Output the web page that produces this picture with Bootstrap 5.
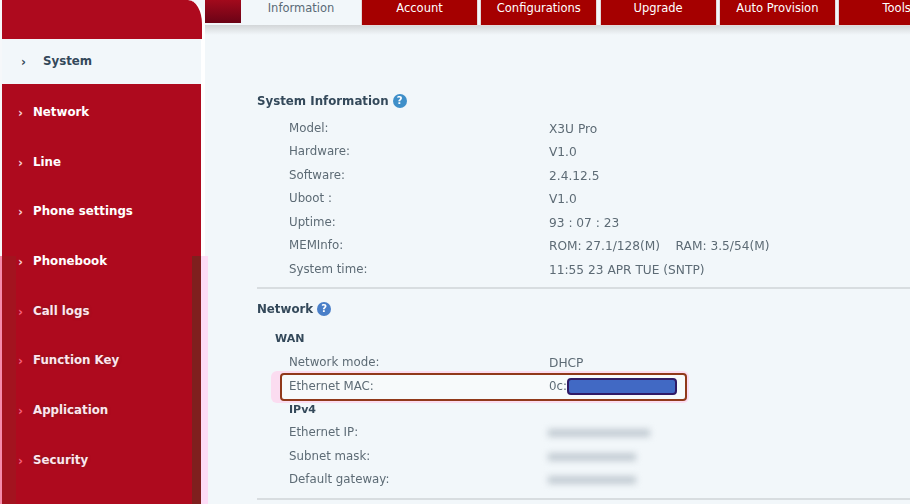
<!doctype html>
<html lang="en"><head><meta charset="utf-8">
<link href="https://cdn.jsdelivr.net/npm/bootstrap@5.3.0/dist/css/bootstrap.min.css" rel="stylesheet">
<style>
html,body{height:504px;overflow:hidden}
body{background:#f2f7fa;font-family:"DejaVu Sans",sans-serif;color:#5d6b75;font-size:11.8px}
.pg{height:504px;filter:blur(.35px)}
.side{width:205px;flex:none;position:relative;z-index:2;border-left:2px solid #f6f8fa}
.side-top{height:39px;background:#ae0a1e;border-right:3px solid #fff;border-top-right-radius:17px 24px}
.side-list{background:#ae0a1e;height:465px;position:relative;border-right:4px solid #fff}
.over{position:absolute}
.edge-r{right:0;top:217px;bottom:0;width:9px;background:#7f1f1e}
.edge-l{left:0;top:217px;bottom:0;width:14px;background:#a3131f}
.pink-r{right:-7px;top:217px;bottom:0;width:7px;background:#fddcf6}
.pink-l{left:-2px;top:217px;bottom:0;width:2px;background:#f48cab}
.side-item{height:49.7px;display:flex;align-items:center;padding-left:16px;color:#fff;font-weight:700;font-size:11.8px;position:relative}
.side-item .chev{width:15px;font-size:12px;color:#f8d0d8}
.side-item.on{height:45px;background:#f2f7fa;color:#34495a;padding-left:19px;margin-bottom:4px}
.side-item.on .chev{width:22px;color:#34495a}
.side-item.low{color:#fde6ee;text-shadow:0 0 3px #7a1f20}
.side-item.low .chev{color:#f5637f;text-shadow:none}
.main{min-width:0;flex:1}
.top{height:35px;background:linear-gradient(#f2f7fa 0,#f2f7fa 25px,#d3d6d8 25px,#f2f7fa 35px);display:flex;overflow:hidden}
.stub{width:56px;margin-left:-20px;height:23px;background:linear-gradient(#a20a1c,#6b0316);flex:none;margin-right:1px}
.tabb{width:115px;flex:none;height:25px;background:#a50000;color:#fff;text-align:center;font-size:11.5px;line-height:16px;margin-right:4.3px;box-shadow:0 0 0 1px #e3d9d9}
.tabb.on{width:118px;margin-right:2px;background:#f2f7fa;color:#5a6a76;box-shadow:none}
.content{padding:56px 0 0 52px}
.h-sec{font-weight:700;color:#34495a;font-size:11.8px;line-height:20px;display:flex;align-items:center;gap:4px}
.q{width:14px;height:14px;border-radius:50%;background:#3f8fc9;color:#fff;font-size:10px;line-height:14px;text-align:center;font-weight:700}
.q.q2{background:#4a7fc8}
.rowi{display:flex;height:23.5px;align-items:center;padding-left:32px}
.rowi .k{width:260px;flex:none}
.rowi .v{font-size:12.2px}
.first{margin-top:6px}
.sub{font-weight:700;color:#34495a;padding-left:18px;height:24px;display:flex;align-items:center;font-size:11px;margin-top:9px}
.sub.sub2{padding-left:32px;height:23px;margin-top:0}
.rule{height:2px;background:#d8dde0;margin:5px 0 10px}
.rule.last{margin-top:6px}
.mac{position:relative}
.mac-box{position:absolute;left:23px;top:-2.25px;width:407px;height:28px;border:2px solid #90391a;border-radius:4px;box-shadow:0 0 0 2px #fbdcf0,-7px 0 0 2px #fbdcf0;background:#f7fafb;z-index:-1}
.cover{display:inline-block;width:110px;height:17px;background:#4169c4;border:2px solid #2f1a66;border-radius:4px;vertical-align:middle}
.blur{display:inline-block;height:8px;background:#c3ccd3;filter:blur(3px);margin-left:-1px}
</style></head><body>
<div class="pg d-flex">
<nav class="side">
<div class="side-top"></div>
<div class="side-list">
<div class="over edge-l"></div><div class="over edge-r"></div><div class="over pink-r"></div><div class="over pink-l"></div>
<div class="side-item on"><span class="chev">›</span>System</div>
<div class="side-item"><span class="chev">›</span>Network</div>
<div class="side-item"><span class="chev">›</span>Line</div>
<div class="side-item"><span class="chev">›</span>Phone settings</div>
<div class="side-item"><span class="chev">›</span>Phonebook</div>
<div class="side-item low"><span class="chev">›</span>Call logs</div>
<div class="side-item low"><span class="chev">›</span>Function Key</div>
<div class="side-item low"><span class="chev">›</span>Application</div>
<div class="side-item low"><span class="chev">›</span>Security</div>
</div>
</nav>
<main class="main">
<div class="top"><div class="stub"></div>
<div class="tabb on">Information</div><div class="tabb">Account</div><div class="tabb">Configurations</div><div class="tabb">Upgrade</div><div class="tabb">Auto Provision</div><div class="tabb">Tools</div></div>
<div class="content">
<div class="h-sec">System Information <span class="q">?</span></div>
<div class="rowi first"><span class="k">Model:</span><span class="v">X3U Pro</span></div>
<div class="rowi"><span class="k">Hardware:</span><span class="v">V1.0</span></div>
<div class="rowi"><span class="k">Software:</span><span class="v">2.4.12.5</span></div>
<div class="rowi"><span class="k">Uboot :</span><span class="v">V1.0</span></div>
<div class="rowi"><span class="k">Uptime:</span><span class="v">93 : 07 : 23</span></div>
<div class="rowi"><span class="k">MEMInfo:</span><span class="v">ROM: 27.1/128(M)&nbsp;&nbsp;&nbsp;&nbsp;RAM: 3.5/54(M)</span></div>
<div class="rowi"><span class="k">System time:</span><span class="v">11:55 23 APR TUE (SNTP)</span></div>
<div class="rule"></div>
<div class="h-sec">Network <span class="q q2">?</span></div>
<div class="sub">WAN</div>
<div class="rowi"><span class="k">Network mode:</span><span class="v">DHCP</span></div>
<div class="rowi mac"><span class="k">Ethernet MAC:</span><span>0c:<span class="cover"></span></span><span class="mac-box"></span></div>
<div class="sub sub2">IPv4</div>
<div class="rowi"><span class="k">Ethernet IP:</span><span class="blur" style="width:102px"></span></div>
<div class="rowi"><span class="k">Subnet mask:</span><span class="blur" style="width:88px"></span></div>
<div class="rowi"><span class="k">Default gateway:</span><span class="blur" style="width:88px"></span></div>
<div class="rule last"></div>
</div>
</main>
</div>
<script src="https://cdn.jsdelivr.net/npm/bootstrap@5.3.0/dist/js/bootstrap.bundle.min.js"></script>
</body></html>
